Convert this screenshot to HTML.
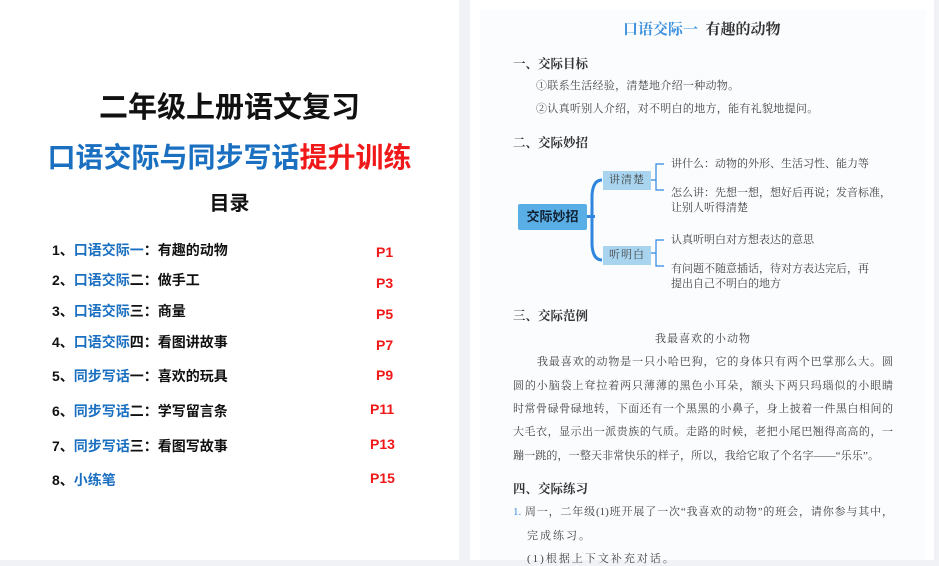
<!DOCTYPE html>
<html><head><meta charset="utf-8"><style>
body{margin:0;width:939px;height:560px;background:#f1f2f6;position:relative;overflow:hidden;font-family:"Liberation Sans","Noto Sans CJK SC",sans-serif}
.a{position:absolute;white-space:nowrap}
#L{position:absolute;left:0;top:0;width:459px;height:560px;background:#fff}
#R{position:absolute;left:470px;top:0;width:464px;height:560px;background:#fff}
#Ri{position:absolute;left:480px;top:10px;width:446px;height:550px;background:#fbfcfe}
.t{font-weight:bold;font-size:14px;color:#111}
.b{color:#1a6fc0}
.p{color:#f01818;font-weight:bold;font-size:14px}
.s{font-family:"Liberation Serif","Noto Serif CJK SC",serif;color:#333}
.h{font-size:12.5px;font-weight:bold;color:#333;font-family:"Liberation Serif","Noto Serif CJK SC",serif}
.k{font-size:11px;letter-spacing:0;color:#444;font-family:"Liberation Serif","Noto Serif CJK SC",serif}
.pl{font-size:11px;color:#444;font-family:"Liberation Serif","Noto Serif CJK SC",serif;text-align:justify;text-align-last:justify;white-space:normal}
</style></head><body>
<div id="L"></div><div id="R"></div><div id="Ri"></div>
<div class="a" style="left:0;width:459px;text-align:center;top:84px;font-size:29px;font-weight:bold;color:#111">二年级上册语文复习</div>
<div class="a" style="left:0;width:459px;text-align:center;top:136px;font-size:28px;font-weight:bold;color:#1a6fc0">口语交际与同步写话<span style="color:#f01818">提升训练</span></div>
<div class="a" style="left:0;width:459px;text-align:center;top:187px;font-size:20px;font-weight:bold;color:#111">目录</div>
<div class="a t" style="left:52px;top:240px">1、<span class="b">口语交际</span><span class="b">一</span>：有趣的动物</div>
<div class="a t" style="left:52px;top:270px">2、<span class="b">口语交际</span>二：做手工</div>
<div class="a t" style="left:52px;top:301px">3、<span class="b">口语交际</span>三：商量</div>
<div class="a t" style="left:52px;top:332px">4、<span class="b">口语交际</span>四：看图讲故事</div>
<div class="a t" style="left:52px;top:366px">5、<span class="b">同步写话</span>一：喜欢的玩具</div>
<div class="a t" style="left:52px;top:401px">6、<span class="b">同步写话</span>二：学写留言条</div>
<div class="a t" style="left:52px;top:436px">7、<span class="b">同步写话</span>三：看图写故事</div>
<div class="a t" style="left:52px;top:470px">8、<span class="b">小练笔</span></div>
<div class="a p" style="left:376px;top:244px">P1</div>
<div class="a p" style="left:376px;top:275px">P3</div>
<div class="a p" style="left:376px;top:306px">P5</div>
<div class="a p" style="left:376px;top:337px">P7</div>
<div class="a p" style="left:376px;top:367px">P9</div>
<div class="a p" style="left:370px;top:401px">P11</div>
<div class="a p" style="left:370px;top:436px">P13</div>
<div class="a p" style="left:370px;top:470px">P15</div>

<div class="a s" style="left:623px;top:18px;font-size:15px;font-weight:bold"><span style="color:#3b8fdc">口语交际一</span>&nbsp;&nbsp;有趣的动物</div>
<div class="a h" style="left:513px;top:54px">一、交际目标</div>
<div class="a k" style="left:536px;top:77px;letter-spacing:0.3px">①联系生活经验，清楚地介绍一种动物。</div>
<div class="a k" style="left:536px;top:100px;letter-spacing:0.3px">②认真听别人介绍，对不明白的地方，能有礼貌地提问。</div>
<div class="a h" style="left:513px;top:133px">二、交际妙招</div>
<svg class="a" style="left:580px;top:170px" width="30" height="100"><path d="M22 10 Q13 10 12 25 L12 75 Q13 90 22 90" stroke="#2e86de" stroke-width="3" fill="none"/></svg>
<svg class="a" style="left:650px;top:160px" width="25" height="115"><path d="M14 4 H6 V30 H14 M0 20 H6 M14 80 H6 V106 H14 M0 93 H6" stroke="#2e86de" stroke-width="1.2" fill="none"/></svg>
<div class="a" style="left:518px;top:204px;width:69px;height:26px;background:#5aaee6;border-radius:2px;color:#123;font-size:13px;font-weight:bold;text-align:center;line-height:26px">交际妙招</div>
<div class="a" style="left:587px;top:215px;width:8px;height:3px;background:#2e86de"></div>
<div class="a k" style="left:603px;top:171px;width:48px;height:19px;background:#a8d4ef;text-align:center;line-height:19px;letter-spacing:1px">讲清楚</div>
<div class="a k" style="left:603px;top:246px;width:48px;height:19px;background:#a8d4ef;text-align:center;line-height:19px;letter-spacing:1px">听明白</div>
<div class="a k" style="left:671px;top:155px">讲什么：动物的外形、生活习性、能力等</div>
<div class="a k" style="left:671px;top:184px">怎么讲：先想一想，想好后再说；发音标准，</div>
<div class="a k" style="left:671px;top:199px">让别人听得清楚</div>
<div class="a k" style="left:671px;top:231px">认真听明白对方想表达的意思</div>
<div class="a k" style="left:671px;top:260px">有问题不随意插话，待对方表达完后，再</div>
<div class="a k" style="left:671px;top:275px">提出自己不明白的地方</div>
<div class="a h" style="left:513px;top:306px">三、交际范例</div>
<div class="a k" style="left:655px;top:330px;letter-spacing:1px">我最喜欢的小动物</div>
<div class="a pl" style="left:537px;width:356px;top:353px">我最喜欢的动物是一只小哈巴狗，它的身体只有两个巴掌那么大。圆</div>
<div class="a pl" style="left:513px;width:380px;top:377px">圆的小脑袋上耷拉着两只薄薄的黑色小耳朵，额头下两只玛瑙似的小眼睛</div>
<div class="a pl" style="left:513px;width:380px;top:400px">时常骨碌骨碌地转，下面还有一个黑黑的小鼻子，身上披着一件黑白相间的</div>
<div class="a pl" style="left:513px;width:380px;top:423px">大毛衣，显示出一派贵族的气质。走路的时候，老把小尾巴翘得高高的，一</div>
<div class="a pl" style="left:513px;width:366px;top:447px">蹦一跳的，一整天非常快乐的样子，所以，我给它取了个名字——“乐乐”。</div>
<div class="a h" style="left:513px;top:479px">四、交际练习</div>
<div class="a pl" style="left:513px;width:380px;top:503px"><span style="color:#3b8fdc">1.</span> 周一，二年级(1)班开展了一次“我喜欢的动物”的班会，请你参与其中，</div>
<div class="a k" style="left:527px;top:527px;letter-spacing:2px">完成练习。</div>
<div class="a k" style="left:527px;top:550px;letter-spacing:2px">(1)根据上下文补充对话。</div>
</body></html>
